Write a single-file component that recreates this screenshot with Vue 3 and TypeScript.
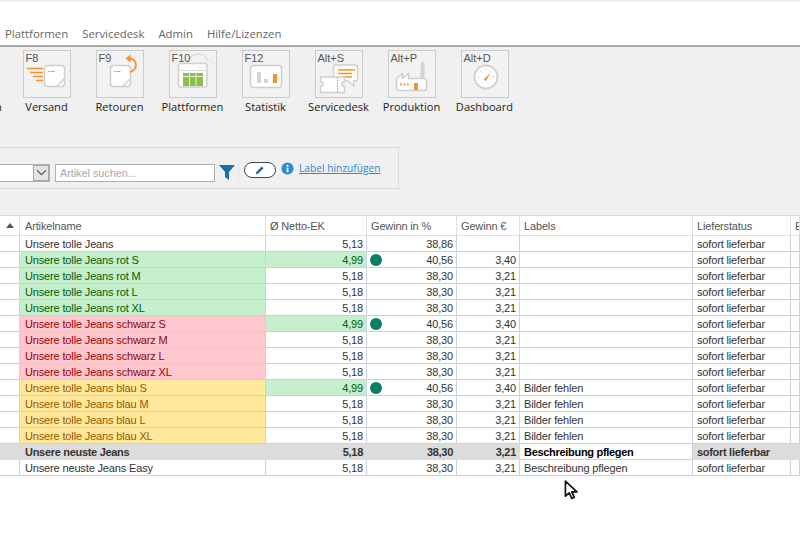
<script setup lang="ts">
interface Row {
  name: string
  ek: string
  pct: string
  gain: string
  label?: string
  tone?: 'green' | 'red' | 'yellow'
  best?: boolean
  bold?: boolean
}

const menu = ['Plattformen', 'Servicedesk', 'Admin', 'Hilfe/Lizenzen']

const make = (size: string, base: string, tone: Row['tone'], label?: string): Row => {
  const best = size === 'S'
  return {
    name: `Unsere tolle Jeans ${base} ${size}`,
    ek: best ? '4,99' : '5,18',
    pct: best ? '40,56' : '38,30',
    gain: best ? '3,40' : '3,21',
    tone,
    best,
    label,
  }
}
const sizes = ['S', 'M', 'L', 'XL']

const rows: Row[] = [
  { name: 'Unsere tolle Jeans', ek: '5,13', pct: '38,86', gain: '' },
  ...sizes.map((s) => make(s, 'rot', 'green')),
  ...sizes.map((s) => make(s, 'schwarz', 'red')),
  ...sizes.map((s) => make(s, 'blau', 'yellow', 'Bilder fehlen')),
  { name: 'Unsere neuste Jeans', ek: '5,18', pct: '38,30', gain: '3,21', label: 'Beschreibung pflegen', bold: true },
  { name: 'Unsere neuste Jeans Easy', ek: '5,18', pct: '38,30', gain: '3,21', label: 'Beschreibung pflegen' },
]
</script>

<template>
  <div class="app">
    <nav class="menu">
      <span v-for="m in menu" :key="m" class="menu-item">{{ m }}</span>
    </nav>

    <section class="ribbon">
      <div class="tools">
        <div class="tool"><div class="tile"></div><span class="tool-label">Abrechnen</span></div>

        <div class="tool">
          <div class="tile">
            <span class="key">F8</span>
            <svg viewBox="0 0 48 48" class="ico">
              <g stroke="#f5922f" stroke-width="1.500" fill="none"><path d="M4 18.500h16M7 22.500h13M10 26.500h10M13 30.500h7" /></g>
              <rect x="21.500" y="15.500" width="20" height="21" rx="3" fill="#fff" stroke="#cfcfcf" stroke-width="1.500" />
              <path d="M41 29l-7 7" stroke="#cfcfcf" stroke-width="1.500" />
              <path d="M25 21.500h1.500M27.500 21.500h4" stroke="#f5922f" stroke-width="1.200" />
            </svg>
          </div>
          <span class="tool-label">Versand</span>
        </div>

        <div class="tool">
          <div class="tile">
            <span class="key">F9</span>
            <svg viewBox="0 0 48 48" class="ico">
              <rect x="14.500" y="15.500" width="20" height="21" rx="3" fill="#fff" stroke="#cfcfcf" stroke-width="1.500" />
              <path d="M34 29l-7 7" stroke="#cfcfcf" stroke-width="1.500" />
              <path d="M18 21.500h1.500M20.500 21.500h4" stroke="#f5922f" stroke-width="1.200" />
              <path d="M33 8.500c4 0 7 3 7 6.500s-3 6.500-6 7" fill="none" stroke="#f5922f" stroke-width="1.800" />
              <path d="M34.500 4.500v8l-5-4z" fill="#f5922f" />
            </svg>
          </div>
          <span class="tool-label">Retouren</span>
        </div>

        <div class="tool">
          <div class="tile">
            <svg viewBox="0 0 48 48" class="ico">
              <path d="M19 13c1-6 6-10 12-9 4 0 6 3 7 6 4 0 7 2 7 5" fill="none" stroke="#dcdcdc" stroke-width="1.200" />
              <rect x="9.500" y="13.500" width="28.500" height="23.500" rx="2" fill="#fff" stroke="#cfcfcf" stroke-width="1.500" />
              <path d="M10 20.500h28" stroke="#d8d8d8" stroke-width="1" />
              <path d="M29 17h1.500M32 17h1.500M35 17h1.500" stroke="#d0d0d0" stroke-width="1.200" />
              <rect x="14" y="23" width="20" height="13" fill="#8cc04b" />
              <path d="M20.500 23v13M27 23v13M14 26.500h20" stroke="#fff" stroke-width="0.800" />
            </svg>
            <span class="key">F10</span>
          </div>
          <span class="tool-label">Plattformen</span>
        </div>

        <div class="tool">
          <div class="tile">
            <span class="key">F12</span>
            <svg viewBox="0 0 48 48" class="ico">
              <rect x="8.500" y="15.500" width="31" height="22" rx="3" fill="#fff" stroke="#cfcfcf" stroke-width="1.500" />
              <rect x="15" y="22" width="4" height="11" fill="#d4d4d4" />
              <rect x="22" y="29" width="4" height="4" fill="#d4d4d4" />
              <rect x="31" y="24" width="4" height="9" fill="#f5922f" />
            </svg>
          </div>
          <span class="tool-label">Statistik</span>
        </div>

        <div class="tool">
          <div class="tile">
            <span class="key">Alt+S</span>
            <svg viewBox="0 0 48 48" class="ico">
              <path d="M20.500 15h20a2 2 0 0 1 2 2v12a2 2 0 0 1-2 2h-2l.5 5-6-5h-12.500a2 2 0 0 1-2-2v-12a2 2 0 0 1 2-2z" fill="#fff" stroke="#cfcfcf" stroke-width="1.400" />
              <path d="M23 20h17M23 23.500h14M26 27h11" stroke="#f5922f" stroke-width="1.400" />
              <path d="M5.500 27h24v4.500a2.500 2.500 0 0 0 0 5v6h-24v-6a2.500 2.500 0 0 0 0-5z" fill="#fff" stroke="#cfcfcf" stroke-width="1.400" />
              <path d="M22.500 27.500v15" stroke="#f5922f" stroke-width="1" stroke-dasharray="1.500 1.200" />
            </svg>
          </div>
          <span class="tool-label">Servicedesk</span>
        </div>

        <div class="tool">
          <div class="tile">
            <span class="key">Alt+P</span>
            <svg viewBox="0 0 48 48" class="ico">
              <rect x="32.500" y="12" width="4" height="16" rx="1.500" fill="#d4d4d4" />
              <path d="M8.500 28.500l6-5v5l6-5v5h15a3 3 0 0 1 3 3v6a3 3 0 0 1-3 3h-25a2 2 0 0 1-2-2z" fill="#fff" stroke="#cfcfcf" stroke-width="1.500" />
              <path d="M12 34.500h1.800M15.500 34.500h1.800M19 34.500h1.800" stroke="#f5922f" stroke-width="1.800" />
              <rect x="26" y="33" width="4" height="7" fill="#f5922f" />
            </svg>
          </div>
          <span class="tool-label">Produktion</span>
        </div>

        <div class="tool">
          <div class="tile">
            <span class="key">Alt+D</span>
            <svg viewBox="0 0 48 48" class="ico">
              <circle cx="25" cy="27" r="11.500" fill="#fff" stroke="#cfcfcf" stroke-width="1.800" />
              <path d="M25 18v2M33.500 27h-2M16.500 27h2M19 21l1.500 1.500M31 21l-1.500 1.500" stroke="#d4d4d4" stroke-width="1" />
              <path d="M22.500 29.500l7-6.500-4.500 8z" fill="#f5922f" />
            </svg>
          </div>
          <span class="tool-label">Dashboard</span>
        </div>
      </div>

      <div class="filter">
        <div class="select"><span class="select-btn">
          <svg viewBox="0 0 12 8" width="11" height="7"><path d="M1 1.500l5 5 5-5" fill="none" stroke="#555" stroke-width="1.400" /></svg>
        </span></div>
        <div class="search">Artikel suchen...</div>
        <svg class="funnel" viewBox="0 0 16 16" width="16" height="16"><path d="M0 1h16l-6 7v8l-4-3v-5z" fill="#1c6ea4" /></svg>
        <span class="sep"></span>
        <span class="pill">
          <svg viewBox="0 0 12 12" width="10" height="10"><path d="M1 11l.7-3L8 1.700 10.300 4 4 10.300z" fill="#1c6ea4" /></svg>
        </span>
        <svg class="info" viewBox="0 0 14 14" width="13" height="13">
          <circle cx="7" cy="7" r="6.500" fill="#2f8ad0" />
          <rect x="6" y="3" width="2" height="2" fill="#fff" />
          <rect x="6" y="6" width="2" height="5" fill="#fff" />
        </svg>
        <a class="link">Label hinzufügen</a>
      </div>
    </section>

    <section class="grid">
      <div class="row head">
        <div class="c c0"><span class="sort"></span></div>
        <div class="c c1">Artikelname</div>
        <div class="c c2">Ø Netto-EK</div>
        <div class="c c3">Gewinn in %</div>
        <div class="c c4">Gewinn €</div>
        <div class="c c5">Labels</div>
        <div class="c c6">Lieferstatus</div>
        <div class="c c7">E</div>
      </div>
      <div v-for="(r, i) in rows" :key="i" class="row" :class="{ bold: r.bold }">
        <div class="c c0"></div>
        <div class="c c1" :class="r.tone">{{ r.name }}</div>
        <div class="c c2 num" :class="{ green: r.best }">{{ r.ek }}</div>
        <div class="c c3 num">
          <span v-if="r.best" class="dot"></span>
          {{ r.pct }}
        </div>
        <div class="c c4 num">{{ r.gain }}</div>
        <div class="c c5">{{ r.label }}</div>
        <div class="c c6">sofort lieferbar</div>
        <div class="c c7"></div>
      </div>
    </section>

    <svg class="cursor" viewBox="0 0 16 22" width="15" height="21">
      <path d="M1.500 1v16l4-3.500 2.800 6 2.700-1.200-2.700-5.800h5.500z" fill="#fff" stroke="#111" stroke-width="1.800" stroke-linejoin="round" />
    </svg>
  </div>
</template>

<style>
html, body { margin: 0; background: #fff; overflow: hidden; }
</style>

<style scoped>
.app {
  position: relative;
  width: 800px;
  height: 533px;
  overflow: hidden;
  background: #fff;
  border-top: 2px solid #eeeeee;
  box-sizing: border-box;
  font-family: "Liberation Sans", Arial, sans-serif;
  color: #333;
}
.menu {
  display: flex;
  height: 45px;
  box-sizing: border-box;
  padding: 24px 0 0 5px;
  gap: 14px;
  border-bottom: 2px solid #a8a8a8;
  font: 11.35px/16px "Open Sans", sans-serif;
  color: #666;
}
.ribbon {
  background: #f0f0f0;
  height: 168px;
  padding-top: 3px;
  box-sizing: border-box;
}
.tools {
  display: flex;
  margin-left: -63px;
}
.tool {
  width: 73px;
  display: flex;
  flex-direction: column;
  align-items: center;
  flex: none;
}
.tile {
  position: relative;
  width: 48px;
  height: 48px;
  box-sizing: border-box;
  border: 1px solid #cbcbcb;
  background: #f2f2f2;
}
.ico { position: absolute; left: -1px; top: -1px; width: 48px; height: 48px; }
.key {
  position: absolute;
  left: 2px;
  top: 0;
  font: 11px/14px "Liberation Sans", sans-serif;
  color: #555;
  z-index: 1;
}
.tool-label {
  margin-top: 1px;
  font: 11.1px/16px "Open Sans", sans-serif;
  color: #222;
  white-space: nowrap;
}
.filter {
  display: flex;
  align-items: center;
  width: 399px;
  height: 42px;
  margin-top: 32px;
  box-sizing: border-box;
  border: 1px solid #d9d9d9;
  border-left: 0;
}
.select {
  width: 51px;
  height: 18px;
  margin: 9px 0 0 -1px;
  box-sizing: border-box;
  border: 1px solid #b0b0b0;
  background: #fff;
  display: flex;
  justify-content: flex-end;
}
.select-btn {
  width: 16px;
  background: #e4e4e4;
  border: 1px solid #a8a8a8;
  box-sizing: border-box;
  display: flex;
  align-items: center;
  justify-content: center;
}
.search {
  width: 160px;
  height: 18px;
  margin: 9px 0 0 5px;
  box-sizing: border-box;
  border: 1px solid #b0b0b0;
  background: #fff;
  padding-left: 4px;
  font: 11px/16px "Liberation Sans", sans-serif;
  letter-spacing: -0.1px;
  color: #aaa;
}
.funnel { margin: 7px 0 0 4px; flex: none; }
.sep { width: 1px; height: 19px; background: #e2e2e2; margin: 9px 0 0 3px; }
.pill {
  width: 32px;
  height: 16px;
  margin: 3px 0 0 5px;
  box-sizing: border-box;
  border: 1px solid #3c4a58;
  border-radius: 8px;
  background: #fff;
  display: flex;
  align-items: center;
  justify-content: center;
}
.info { margin: 0 0 0 5px; flex: none; }
.link {
  margin: 0 0 0 5px;
  font: 10.2px/14px "Open Sans", sans-serif;
  color: #2f8ad0;
  text-decoration: underline;
  white-space: nowrap;
}
.grid {
  border-top: 1px solid #dcdcdc;
  font-size: 11px;
  letter-spacing: -0.15px;
}
.row {
  display: flex;
  height: 16px;
  line-height: 14px;
}
.row.head { height: 20px; line-height: 18px; color: #555; }
.c {
  flex: none;
  box-sizing: border-box;
  padding: 1px 3px 0 4px;
  border-right: 1px solid #c9d2de;
  border-bottom: 1px solid #c9d2de;
  white-space: nowrap;
  overflow: hidden;
  position: relative;
}
.head .c { border-color: #dcdfe4; }
.c0 { width: 20px; }
.c1 { width: 246px; padding-left: 5px; }
.c2 { width: 101px; }
.c3 { width: 90px; }
.c4 { width: 63px; }
.c5 { width: 173px; }
.c6 { width: 98px; }
.c7 { width: 9px; }
.num { text-align: right; }
.green { background: #c6efce; color: #006100; }
.red { background: #ffc7ce; color: #9c0006; }
.yellow { background: #ffe89c; color: #9c5700; }
.sort {
  position: absolute;
  left: 6px;
  top: 7px;
  border: 4px solid transparent;
  border-top: 0;
  border-bottom: 5px solid #555;
}
.dot {
  position: absolute;
  left: 3px;
  top: 2px;
  width: 12px;
  height: 12px;
  border-radius: 50%;
  background: #0a7d62;
}
.bold { font-weight: 700; letter-spacing: -0.3px; }
.bold .c { background: #dcdcdc; border-color: #dcdcdc; }
.bold .c5 { background: #fff; color: #000; border-color: #c9d2de; }
.cursor { position: absolute; left: 564px; top: 478px; }
</style>
